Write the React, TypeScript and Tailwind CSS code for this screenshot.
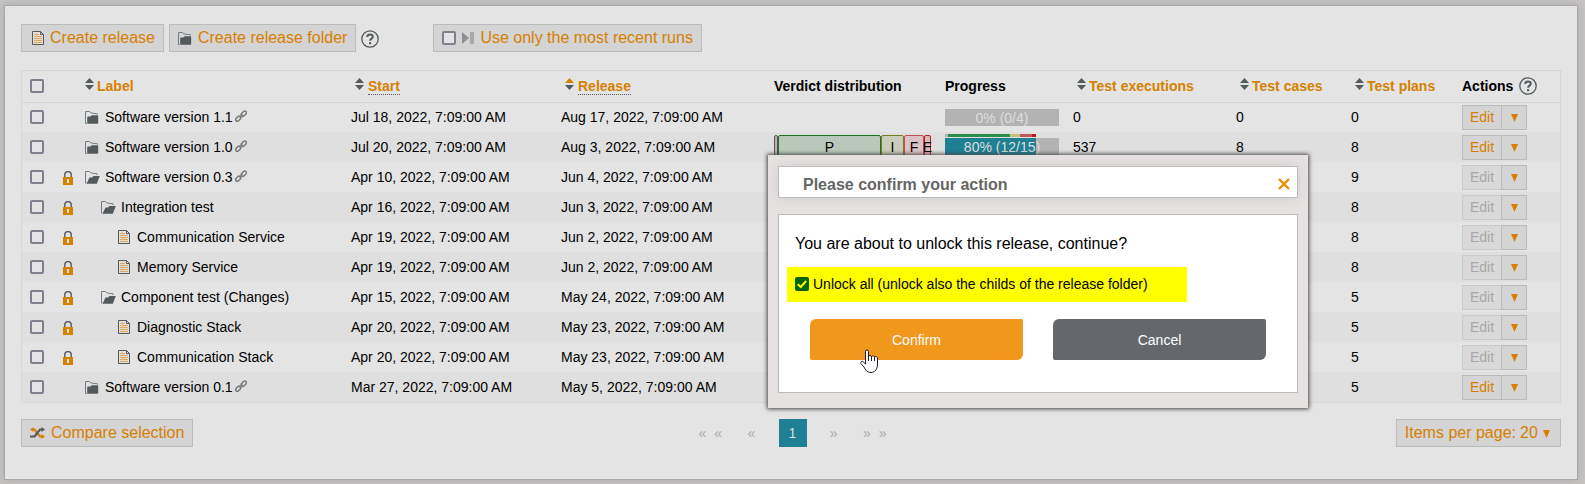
import { useState } from 'react';
import type { ReactNode } from 'react';

type IconName = 'folder' | 'open' | 'doc';

interface Release {
  label: string;
  icon: IconName;
  depth: number;
  locked?: boolean;
  link?: boolean;
  start: string;
  release: string;
  executions?: string;
  cases?: string;
  plans: string;
}

const releases: Release[] = [
  { label: 'Software version 1.1', icon: 'folder', depth: 0, link: true, start: 'Jul 18, 2022, 7:09:00 AM', release: 'Aug 17, 2022, 7:09:00 AM', executions: '0', cases: '0', plans: '0' },
  { label: 'Software version 1.0', icon: 'folder', depth: 0, link: true, start: 'Jul 20, 2022, 7:09:00 AM', release: 'Aug 3, 2022, 7:09:00 AM', executions: '537', cases: '8', plans: '8' },
  { label: 'Software version 0.3', icon: 'open', depth: 0, locked: true, link: true, start: 'Apr 10, 2022, 7:09:00 AM', release: 'Jun 4, 2022, 7:09:00 AM', plans: '9' },
  { label: 'Integration test', icon: 'open', depth: 1, locked: true, start: 'Apr 16, 2022, 7:09:00 AM', release: 'Jun 3, 2022, 7:09:00 AM', plans: '8' },
  { label: 'Communication Service', icon: 'doc', depth: 2, locked: true, start: 'Apr 19, 2022, 7:09:00 AM', release: 'Jun 2, 2022, 7:09:00 AM', plans: '8' },
  { label: 'Memory Service', icon: 'doc', depth: 2, locked: true, start: 'Apr 19, 2022, 7:09:00 AM', release: 'Jun 2, 2022, 7:09:00 AM', plans: '8' },
  { label: 'Component test (Changes)', icon: 'open', depth: 1, locked: true, start: 'Apr 15, 2022, 7:09:00 AM', release: 'May 24, 2022, 7:09:00 AM', plans: '5' },
  { label: 'Diagnostic Stack', icon: 'doc', depth: 2, locked: true, start: 'Apr 20, 2022, 7:09:00 AM', release: 'May 23, 2022, 7:09:00 AM', plans: '5' },
  { label: 'Communication Stack', icon: 'doc', depth: 2, locked: true, start: 'Apr 20, 2022, 7:09:00 AM', release: 'May 23, 2022, 7:09:00 AM', plans: '5' },
  { label: 'Software version 0.1', icon: 'folder', depth: 0, link: true, start: 'Mar 27, 2022, 7:09:00 AM', release: 'May 5, 2022, 7:09:00 AM', plans: '5' },
];

const indents = ['pl-1', 'pl-5', 'pl-9'];

function FolderIcon() {
  return (
    <svg width="14" height="13" viewBox="0 0 14 13" className="shrink-0">
      <path d="M2 12.500H.5V.5H4.500L6 2 12.500 2.800V3.500" fill="none" stroke="#6b7073" strokeWidth=".9" />
      <path d="M2.200 6.500Q2.200 5.500 3.200 5.500H5.500L6.700 4.200H12.300Q13.200 4.200 13.200 5.200V12Q13.200 12.700 12.500 12.700H3Q2.200 12.700 2.200 12z" fill="#54595c" />
    </svg>
  );
}

function OpenFolderIcon() {
  return (
    <svg width="15" height="13" viewBox="0 0 15 13" className="shrink-0">
      <path d="M1.500 12.300 .5 12V.5H4.500L6 2 12 2.800V4" fill="none" stroke="#6b7073" strokeWidth=".9" />
      <path d="M4.500 6.500H7L8.500 5H14.800L11.800 12.700H1.500z" fill="#54595c" />
    </svg>
  );
}

function DocIcon() {
  return (
    <svg width="12" height="14" viewBox="0 0 12 14" className="shrink-0">
      <path d="M.5.5H8.500L11.500 3.500V13.500H.5z" fill="#e4e0da" stroke="#54595c" />
      <path d="M8.500.5V3.500H11.500" fill="none" stroke="#54595c" />
      <path d="M2 3.500H7M2 5.500H10M2 7.500H10M2 9.500H10M2 11.500H10" fill="none" stroke="#dba75f" />
      <path d="M4.500 2V12.500" fill="none" stroke="#e0bd8c" />
    </svg>
  );
}

function LockIcon() {
  return (
    <svg width="10" height="14" viewBox="0 0 10 14">
      <path d="M1.800 7V3.800a3.200 3.200 0 0 1 6.400 0V7" fill="none" stroke="#54595c" strokeWidth="1.400" />
      <path d="M0 6H10V14H0z" fill="#d68000" />
      <path d="M4 8H6V12H4z" fill="#e4e4e4" />
    </svg>
  );
}

function LinkIcon() {
  return (
    <svg width="12" height="12" viewBox="0 0 12 12" fill="none" stroke="#77797b" strokeWidth="1.500" className="shrink-0">
      <rect x="5.800" y="2" width="6" height="3.400" rx="1.700" transform="rotate(-45 8.800 3.700)" />
      <rect x=".2" y="7" width="6" height="3.400" rx="1.700" transform="rotate(-45 3.200 8.700)" />
      <path d="M4.500 7.500 7.500 4.500" />
    </svg>
  );
}

function HelpIcon() {
  return (
    <svg width="18" height="18" viewBox="0 0 18 18" fill="none" stroke="#54595c" className="shrink-0">
      <circle cx="9" cy="9" r="8.200" strokeWidth="1.300" />
      <path d="M6.200 7.100C6.200 5.300 7.400 4.500 9 4.500s2.800.8 2.800 2.300c0 1.800-2.700 1.900-2.700 4" strokeWidth="2" />
      <path d="M8 12.200H10.200V14.200H8z" fill="#54595c" stroke="none" />
    </svg>
  );
}

function ShuffleIcon() {
  return (
    <svg width="15" height="12" viewBox="0 0 15 12" fill="none" className="shrink-0">
      <path d="M3 2.500H4.500L10 9.500H12" stroke="#d68000" strokeWidth="2.200" />
      <path d="M0 2.500 3.500 0V5zM15 9.500 11.500 7V12z" fill="#d68000" />
      <path d="M0 9.500H4.500L10 2.500H12" stroke="#54595c" strokeWidth="2.200" />
      <path d="M15 2.500 11.500 0V5z" fill="#54595c" />
    </svg>
  );
}

function SortIcon({ active = false }: { active?: boolean }) {
  return (
    <svg width="9" height="12" viewBox="0 0 9 12" className="mb-1 shrink-0">
      <path d="M4.500 0 9 5H0z" fill={active ? '#d68000' : '#54595c'} />
      <path d="M4.500 12 0 7H9z" fill="#54595c" />
    </svg>
  );
}

function CaretIcon() {
  return (
    <svg width="7" height="8" viewBox="0 0 7 8" className="mt-0.5 shrink-0">
      <path d="M0 0H7L3.500 8z" fill="#d68000" />
    </svg>
  );
}

function HandCursor() {
  return (
    <svg width="18" height="24" viewBox="0 0 18 24" className="pointer-events-none absolute top-[194px] left-[92px]">
      <path
        d="M5.500 15V2.500a1.500 1.500 0 0 1 3 0V7.500c0-1.200 3-1.200 3 .3 0-1.300 3-1.100 3 .4 0-1 3-.8 3 .8V15c0 5-2.500 8.500-6.500 8.500-4 0-5.500-2.500-7-5.500L.8 14.500c-.8-1.500 1.200-2.700 2.400-1.600z"
        fill="#fff"
        stroke="#1c1c2b"
        strokeWidth="1"
      />
      <path d="M8.500 7V12M11.500 7.500V12M14.500 8V12" stroke="#1c1c2b" />
    </svg>
  );
}

function Checkbox({ label, id }: { label?: string; id?: string }) {
  return (
    <input
      id={id}
      type="checkbox"
      aria-label={label}
      className="block size-3.5 shrink-0 appearance-none rounded-xs border-2 border-[#807f8d] bg-[#e4e4e4] checked:bg-[#54595c]"
    />
  );
}

function ToolButton({ children }: { children: ReactNode }) {
  return (
    <button className="flex h-7 items-center gap-1.5 border border-[#bbb] bg-[#d4d4d4] px-2 text-base leading-6 whitespace-nowrap text-[#d68000]">
      {children}
    </button>
  );
}

function SortHeader({ children, dotted, active }: { children: string; dotted?: boolean; active?: boolean }) {
  return (
    <th scope="col" className={dotted || children.startsWith('Test') ? 'pl-2' : 'pl-1'}>
      <button className={`flex items-center font-bold whitespace-nowrap text-[#d68000] ${dotted ? 'gap-1' : 'gap-[3px]'}`}>
        <SortIcon active={active} />
        <span className={dotted ? 'border-b border-dotted border-[#54595c] leading-4' : 'leading-4'}>{children}</span>
      </button>
    </th>
  );
}

function VerdictBar() {
  return (
    <div className="pb-0.5">
      <div className="flex h-[22px] w-[157px] text-center leading-[22px]">
        <span className="w-1 rounded-xs border border-[#555] bg-[#c4b0b8]" />
        <span className="w-[103px] rounded-xs border border-[#1f6f25] bg-[#b9c8ba]">P</span>
        <span className="w-[23px] rounded-xs border border-[#7a7a20] bg-[#ccccba]">I</span>
        <span className="w-5 rounded-xs border border-[#c44a58] bg-[#dcc3c6]">F</span>
        <span className="flex w-[7px] justify-center rounded-xs border border-[#c01c20] bg-[#dcb9ba]">E</span>
      </div>
    </div>
  );
}

function Progress({ percent, text, verdicts }: { percent: number; text: string; verdicts?: boolean }) {
  return (
    <div className={verdicts ? 'w-[114px] pb-[5px]' : 'w-[114px]'}>
      {verdicts && (
        <div className="flex h-[3px]">
          <span className="w-[3px] bg-[#b3b3b3]" />
          <span className="w-[62px] bg-[#2a8f4c]" />
          <span className="w-2.5 bg-[#c6c27c]" />
          <span className="w-3 bg-[#c4555f]" />
          <span className="w-1 bg-[#c01c20]" />
        </div>
      )}
      <div className={`relative h-[17px] bg-[#b3b3b3] text-center leading-[18px] text-[#dedede] ${verdicts ? 'mt-px' : ''}`}>
        <div className="absolute inset-y-0 left-0 bg-[#1f7f93]" style={{ width: `${percent}%` }} />
        <span className="relative">{text}</span>
      </div>
    </div>
  );
}

function ReleaseRow({ row, index }: { row: Release; index: number }) {
  return (
    <tr className="h-[30px] odd:bg-[#e4e4e4] even:bg-[#dfdfdf]">
      <td className="pl-2"><Checkbox label={`Select ${row.label}`} /></td>
      <td className="pt-0.5 pl-[5px]">{row.locked && <LockIcon />}</td>
      <td className={indents[row.depth]}>
        <div className="flex items-center">
          <span className="flex w-5 shrink-0">
            {row.icon === 'folder' && <FolderIcon />}
            {row.icon === 'open' && <OpenFolderIcon />}
            {row.icon === 'doc' && <span className="ml-px"><DocIcon /></span>}
          </span>
          <span className="whitespace-nowrap">{row.label}</span>
          {row.link && <span className="mb-0.5 ml-0.5"><LinkIcon /></span>}
        </div>
      </td>
      <td className="pl-1 whitespace-nowrap">{row.start}</td>
      <td className="pl-1 whitespace-nowrap">{row.release}</td>
      <td className="pl-1">{index === 1 && <VerdictBar />}</td>
      <td className="pl-1">
        {index === 0 && <Progress percent={0} text="0% (0/4)" />}
        {index === 1 && <Progress percent={80} text="80% (12/15)" verdicts />}
      </td>
      <td className="pl-1">{row.executions}</td>
      <td className="pl-1">{row.cases}</td>
      <td className="pl-1">{row.plans}</td>
      <td className="pl-1">
        <div className="flex h-[25px]">
          <button
            disabled={row.locked}
            className="w-10 border border-[#bbb] bg-[#d4d4d4] text-[#d68000] disabled:border-[#cacaca] disabled:bg-[#d9d9d9] disabled:text-[#a8a8a8]"
          >
            Edit
          </button>
          <button aria-label={`More actions for ${row.label}`} className="-ml-px flex w-[26px] items-center justify-center border border-[#bbb] bg-[#d4d4d4]">
            <CaretIcon />
          </button>
        </div>
      </td>
    </tr>
  );
}

function ReleaseTable() {
  return (
    <div className="border border-[#d6d6d6]">
      <table className="w-full table-fixed border-collapse text-left text-sm leading-5">
        <colgroup>
          <col className="w-9" />
          <col className="w-[23px]" />
          <col />
          <col className="w-[210px]" />
          <col className="w-[213px]" />
          <col className="w-[171px]" />
          <col className="w-[128px]" />
          <col className="w-[163px]" />
          <col className="w-[115px]" />
          <col className="w-[111px]" />
          <col className="w-[102px]" />
        </colgroup>
        <thead>
          <tr className="h-[31px] border-b border-[#d6d6d6]">
            <th scope="col" className="pl-2"><Checkbox label="Select all releases" /></th>
            <td />
            <SortHeader>Label</SortHeader>
            <SortHeader dotted>Start</SortHeader>
            <SortHeader dotted active>Release</SortHeader>
            <th scope="col" className="pl-1">Verdict distribution</th>
            <th scope="col" className="pl-1">Progress</th>
            <SortHeader>Test executions</SortHeader>
            <SortHeader>Test cases</SortHeader>
            <SortHeader>Test plans</SortHeader>
            <th scope="col" className="pl-1">
              <span className="flex items-center gap-1.5">Actions <HelpIcon /></span>
            </th>
          </tr>
        </thead>
        <tbody>
          {releases.map((row, i) => <ReleaseRow key={row.label} row={row} index={i} />)}
        </tbody>
      </table>
    </div>
  );
}

function Pagination() {
  return (
    <nav aria-label="Pages" className="ml-[3px] flex items-center text-sm text-[#aaa]">
      <button className="flex w-[49px] gap-2"><span>«</span><span>«</span></button>
      <button className="w-[31px] text-left">«</button>
      <button aria-current="page" className="size-7 bg-[#1f7f93] text-[#dedede]">1</button>
      <button className="w-[31px] text-right">»</button>
      <button className="flex w-[49px] justify-end gap-2"><span>»</span><span>»</span></button>
    </nav>
  );
}

function ConfirmDialog() {
  const [all, setAll] = useState(true);

  return (
    <div role="dialog" aria-labelledby="dialog-title" className="absolute top-[155px] left-[768px] w-[540px] bg-[#e6e2e1] px-2.5 pt-[11px] pb-[15px] shadow-[0_0_4px_1px_#444]">
      <div className="flex h-8 items-center justify-between border border-[#bbb] bg-white pr-[7px] pl-6 shadow-[0_0_12px_#ccc]">
        <h2 id="dialog-title" className="pt-1.5 text-base leading-6 font-bold text-[#666]">Please confirm your action</h2>
        <button aria-label="Close" className="pt-1">
          <svg width="12" height="12" viewBox="0 0 12 12" stroke="#ef8c00" strokeWidth="2.400">
            <path d="M1 1 11 11M11 1 1 11" />
          </svg>
        </button>
      </div>
      <div className="mt-4 border border-[#bbb] bg-white px-2 pt-[17px] pb-8">
        <p className="px-2 text-base leading-6">You are about to unlock this release, continue?</p>
        <div className="mt-[11px] flex h-[35px] w-[400px] items-center gap-1 bg-[#ff0] pb-px pl-2">
          <span className="grid">
            <input
              id="unlock-all"
              type="checkbox"
              checked={all}
              onChange={(e) => setAll(e.target.checked)}
              className="peer size-3.5 appearance-none rounded-xs border-2 border-[#006400] bg-white [grid-area:1/1] checked:bg-[#006400]"
            />
            <svg width="14" height="14" viewBox="0 0 14 14" className="pointer-events-none invisible [grid-area:1/1] peer-checked:visible">
              <path d="M2.800 7.200 5.800 10 11.200 4" fill="none" stroke="#ff0" strokeWidth="2" />
            </svg>
          </span>
          <label htmlFor="unlock-all" className="text-sm whitespace-nowrap">Unlock all (unlock also the childs of the release folder)</label>
        </div>
        <div className="mt-[17px] flex gap-[30px] px-[23px] text-sm text-white">
          <button className="h-[41px] flex-1 rounded-xs rounded-tl-md rounded-br-md bg-[#f0971c]">Confirm</button>
          <button className="h-[41px] flex-1 rounded-xs rounded-tl-md rounded-br-md bg-[#64676c]">Cancel</button>
        </div>
      </div>
      <HandCursor />
    </div>
  );
}

export default function App() {
  return (
    <div className="relative min-h-screen bg-[#c6c4c3] px-1 pt-[5px] pb-1 font-['Liberation_Sans',Arial,sans-serif] text-black">
      <main className="mr-[3px] border border-[#a8a8a8] bg-[#e4e4e4] px-4 pt-[18px] pb-8 shadow-[0_0_8px_#aaa]">
        <div className="flex items-start">
          <ToolButton><span className="ml-0.5"><DocIcon /></span>Create release</ToolButton>
          <div className="ml-[5px]">
            <ToolButton><FolderIcon />Create release folder</ToolButton>
          </div>
          <button aria-label="Help" className="mt-1.5 ml-[5px]"><HelpIcon /></button>
          <div className="ml-[54px] flex h-7 items-center gap-1.5 border border-[#bbb] bg-[#d4d4d4] px-2">
            <Checkbox id="recent-runs" />
            <svg width="12" height="12" viewBox="0 0 12 12">
              <path d="M0 0 7 6 0 12z" fill="#8f8f8f" />
              <path d="M8 0H12V12H8z" fill="#a9a9a9" />
            </svg>
            <label htmlFor="recent-runs" className="text-base leading-6 whitespace-nowrap text-[#d68000]">Use only the most recent runs</label>
          </div>
        </div>
        <div className="mt-[18px]">
          <ReleaseTable />
        </div>
        <div className="mt-4 grid grid-cols-[1fr_auto_1fr] items-center">
          <div className="flex">
            <ToolButton><ShuffleIcon />Compare selection</ToolButton>
          </div>
          <Pagination />
          <label className="flex h-7 items-center justify-self-end border border-[#bbb] bg-[#d4d4d4] pr-2.5 pl-2 text-base leading-6 text-[#d68000]">
            Items per page:
            <select className="ml-1 w-[23px] appearance-none bg-transparent" defaultValue="20">
              <option>20</option>
              <option>50</option>
            </select>
            <CaretIcon />
          </label>
        </div>
      </main>
      <ConfirmDialog />
    </div>
  );
}
